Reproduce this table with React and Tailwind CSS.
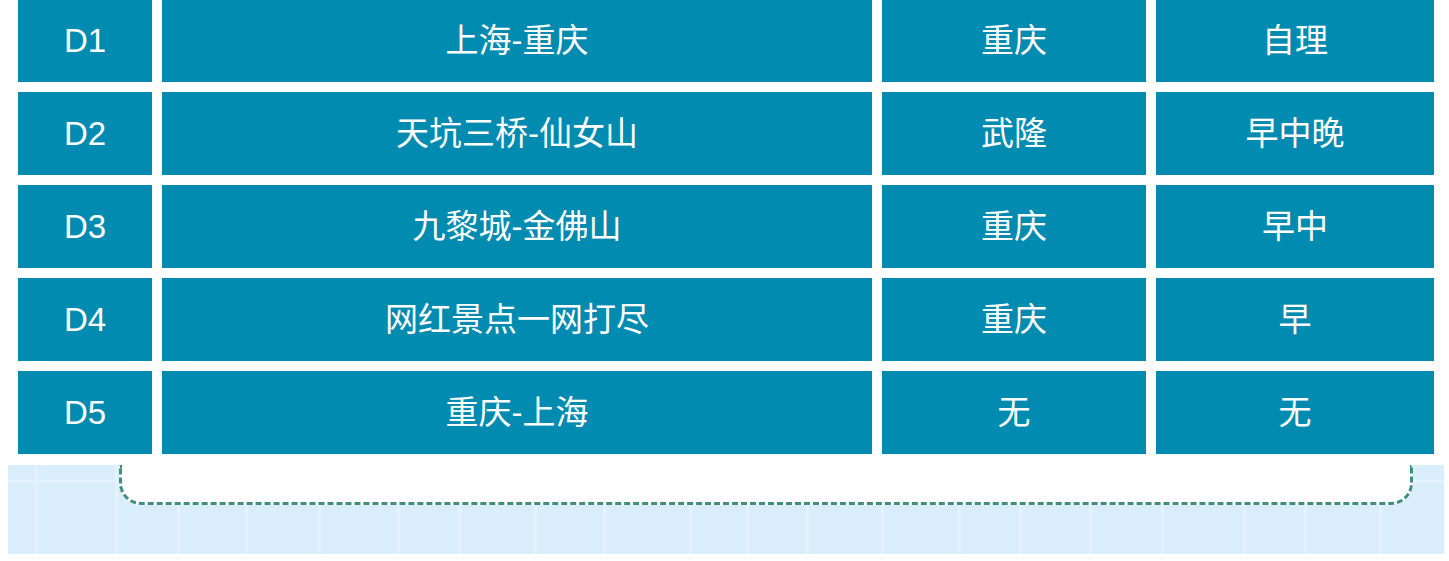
const rows = [
  ["D1", "上海-重庆", "重庆", "自理"],
  ["D2", "天坑三桥-仙女山", "武隆", "早中晚"],
  ["D3", "九黎城-金佛山", "重庆", "早中"],
  ["D4", "网红景点一网打尽", "重庆", "早"],
  ["D5", "重庆-上海", "无", "无"],
];

// faint stripes of the tiled background (x from the left edge of the strip)
const stripes = [27, 107, 169, 237, 310, 389, 450, 526, 595, 681, 738, 798, 873, 950, 1011, 1081, 1153, 1235, 1296, 1371];

const Cell = ({ children }) => (
  <div className="flex items-center justify-center bg-[#028bb0] text-[33px] leading-none text-white">
    {children}
  </div>
);

export default function App() {
  return (
    <div
      className="h-[561px] w-[1449px] overflow-hidden bg-white"
      style={{ fontFamily: '"Liberation Sans", "Noto Sans CJK SC", sans-serif' }}
    >
      <div className="-mt-px flex flex-col gap-[10px] pl-[18px]">
        {rows.map((r) => (
          <div key={r[0]} className="grid h-[83px] grid-cols-[134px_710px_264px_278px] gap-x-[10px]">
            {r.map((t, i) => (
              <Cell key={i}>{t}</Cell>
            ))}
          </div>
        ))}
      </div>

      <div className="relative mx-[8px] mt-[11px] h-[89px] w-[1436px] overflow-hidden bg-[#d9eefa]">
        <div className="absolute left-0 right-0 top-[15px] h-[3px] bg-[#e2f2fb]" />
        {stripes.map((x) => (
          <div key={x} className="absolute top-0 h-full w-[3px] bg-[#e4f3fb]" style={{ left: x }} />
        ))}
        <div className="relative ml-[111px] h-[40px] w-[1294px] rounded-b-[22px] border-[3px] border-t-0 border-dashed border-[#3f8e7e] bg-white" />
      </div>
    </div>
  );
}
